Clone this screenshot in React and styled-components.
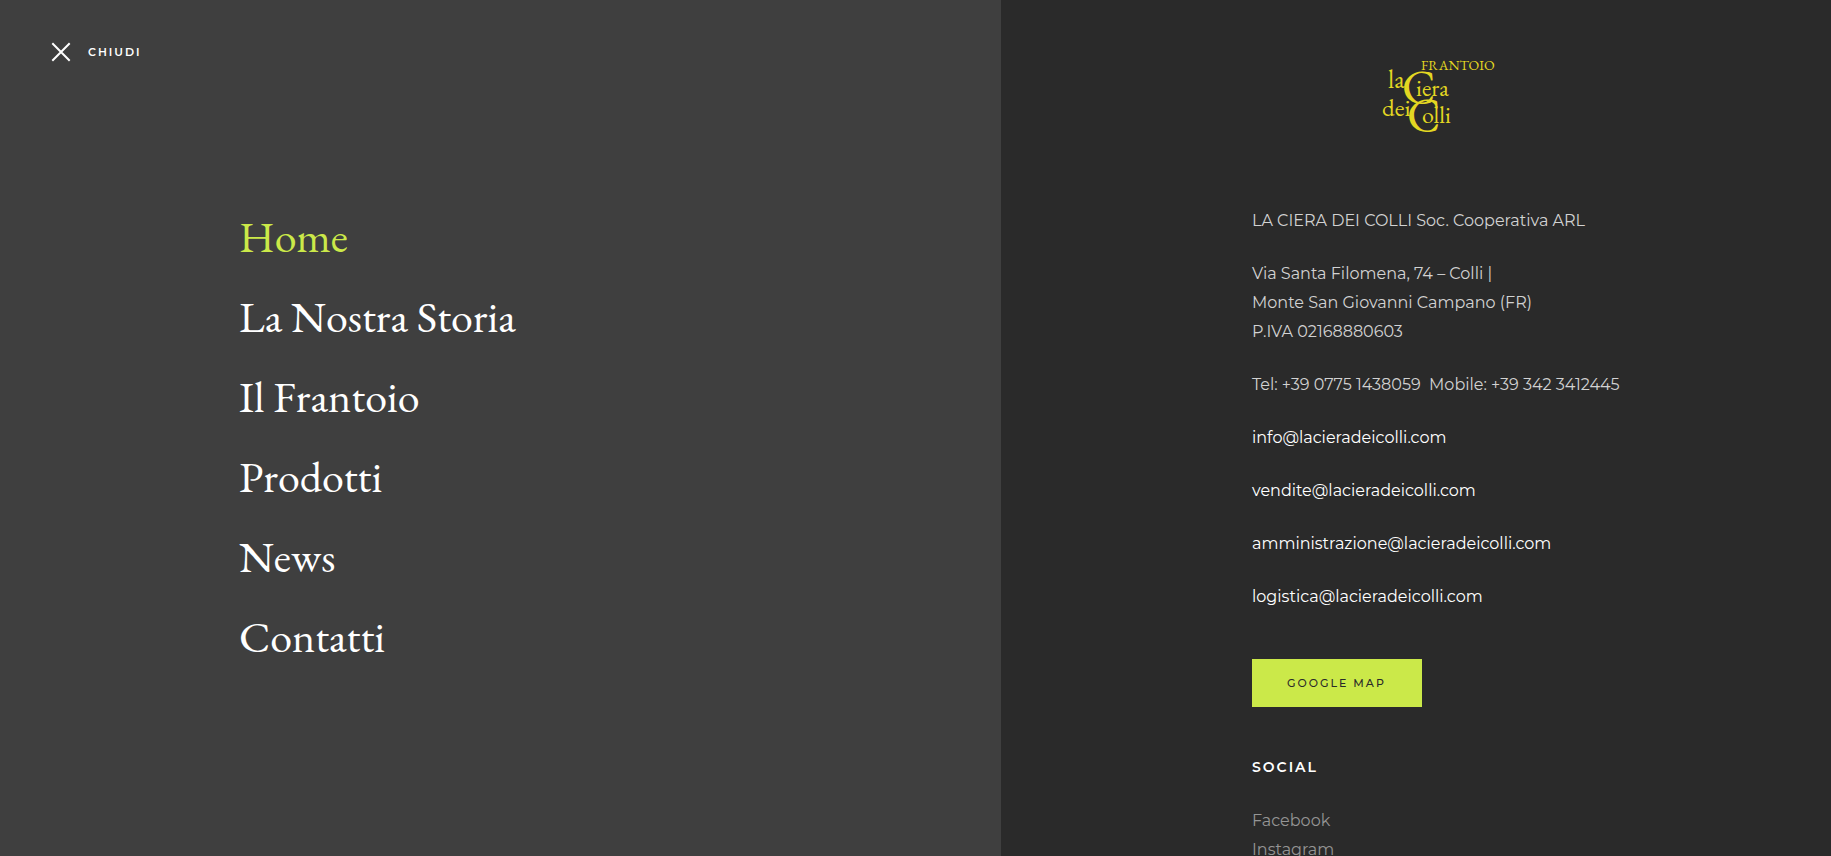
import React from "react";
import styled, { createGlobalStyle, ThemeProvider } from "styled-components";

const theme = {
  lime: "#cbe949",
  gold: "#e3d722",
  panel: "#3f3f3f",
  panelDark: "#2a2a2a",
  text: "#d2d2d2",
  muted: "#959595",
  serif: '"EB Garamond", "Liberation Serif", serif',
  sans: 'Montserrat, Inter, "Liberation Sans", sans-serif',
};

const GlobalStyle = createGlobalStyle`
  *, *::before, *::after { box-sizing: border-box; }
  body { margin: 0; background: ${theme.panelDark}; }
`;

const Overlay = styled.div`
  display: grid;
  grid-template-columns: 1001fr 830fr;
  height: 100vh;
  overflow: hidden;
  font-family: ${(p) => p.theme.sans};
`;

const MenuPanel = styled.div`
  min-width: 0;
  background: ${(p) => p.theme.panel};
`;

const CloseButton = styled.button`
  display: flex;
  align-items: center;
  gap: 17px;
  margin: 40px 0 0 51px;
  padding: 0;
  height: 24px;
  border: 0;
  background: none;
  color: #fff;
  font: 600 11px/26px ${(p) => p.theme.sans};
  letter-spacing: 2px;
  text-transform: uppercase;
  cursor: pointer;
`;

const MenuList = styled.ul`
  display: flex;
  flex-direction: column;
  gap: 24px;
  margin: 145px 0 0;
  padding: 0 0 0 239px;
  list-style: none;
`;

const MenuLink = styled.a`
  display: inline-block;
  color: ${(p) => (p.$active ? p.theme.lime : "#fff")};
  font: 400 44px/56px ${(p) => p.theme.serif};
  text-decoration: none;
`;

const InfoPanel = styled.aside`
  min-width: 0;
  overflow: hidden;
  padding: 54px 209px 0 251px;
  background: ${(p) => p.theme.panelDark};
  color: ${(p) => p.theme.text};
  font-size: 16px;
  line-height: 29px;
`;

const LogoLink = styled.a`
  display: flex;
  justify-content: center;
  margin-bottom: 68px;
`;

const Paragraph = styled.p`
  margin: 0 0 24px;
  white-space: nowrap;
`;

const MailLink = styled.a`
  color: #fff;
  text-decoration: none;
`;

const MapLink = styled.a`
  display: inline-block;
  margin-top: 24px;
  padding: 0 36px 0 35px;
  background: ${(p) => p.theme.lime};
  color: #2a2a2a;
  font-size: 11px;
  font-weight: 500;
  line-height: 48px;
  letter-spacing: 2px;
  text-transform: uppercase;
  text-decoration: none;
`;

const SocialHeading = styled.h2`
  margin: 46px 0 24px;
  color: #fff;
  font-size: 14px;
  font-weight: 600;
  line-height: 29px;
  letter-spacing: 2px;
  text-transform: uppercase;
`;

const SocialList = styled.ul`
  margin: 0;
  padding: 0;
  list-style: none;
`;

const SocialLink = styled.a`
  color: ${(p) => p.theme.muted};
  text-decoration: none;
`;

function CloseIcon() {
  return (
    <svg width="20" height="20" viewBox="0 0 20 20" aria-hidden="true">
      <path d="M1.3 1.3 18.7 18.7M18.7 1.3 1.3 18.7" stroke="#fff" strokeWidth="2" />
    </svg>
  );
}

function Logo() {
  return (
    <svg
      width="124"
      height="84"
      viewBox="0 0 124 84"
      role="img"
      aria-label="Frantoio La Ciera dei Colli"
      fill={theme.gold}
      fontFamily={theme.serif}
    >
      <text x="46" y="16" fontSize="14">FRANTOIO</text>
      <text x="13" y="34" fontSize="26">la</text>
      <text x="27" y="50" fontSize="47">C</text>
      <text x="41" y="42" fontSize="24">iera</text>
      <text x="7" y="62" fontSize="25">dei</text>
      <text x="32" y="78" fontSize="47">C</text>
      <text x="47" y="69" fontSize="24">olli</text>
    </svg>
  );
}

const pages = ["Home", "La Nostra Storia", "Il Frantoio", "Prodotti", "News", "Contatti"];
const mailboxes = ["info", "vendite", "amministrazione", "logistica"];
const socials = ["Facebook", "Instagram"];

export default function App() {
  return (
    <ThemeProvider theme={theme}>
      <GlobalStyle />
      <Overlay>
        <MenuPanel>
          <CloseButton type="button">
            <CloseIcon />
            Chiudi
          </CloseButton>
          <nav>
            <MenuList>
              {pages.map((page, i) => (
                <li key={page}>
                  <MenuLink href="#" $active={i === 0}>{page}</MenuLink>
                </li>
              ))}
            </MenuList>
          </nav>
        </MenuPanel>
        <InfoPanel>
          <LogoLink href="#"><Logo /></LogoLink>
          <Paragraph>LA CIERA DEI COLLI Soc. Cooperativa ARL</Paragraph>
          <Paragraph>
            Via Santa Filomena, 74 – Colli |<br />
            Monte San Giovanni Campano (FR)<br />
            P.IVA 02168880603
          </Paragraph>
          <Paragraph>Tel: +39 0775 1438059&nbsp; Mobile: +39 342 3412445</Paragraph>
          {mailboxes.map((name) => (
            <Paragraph key={name}>
              <MailLink href={`mailto:${name}@lacieradeicolli.com`}>{name}@lacieradeicolli.com</MailLink>
            </Paragraph>
          ))}
          <MapLink href="#">Google Map</MapLink>
          <SocialHeading>Social</SocialHeading>
          <SocialList>
            {socials.map((name) => (
              <li key={name}>
                <SocialLink href="#">{name}</SocialLink>
              </li>
            ))}
          </SocialList>
        </InfoPanel>
      </Overlay>
    </ThemeProvider>
  );
}
